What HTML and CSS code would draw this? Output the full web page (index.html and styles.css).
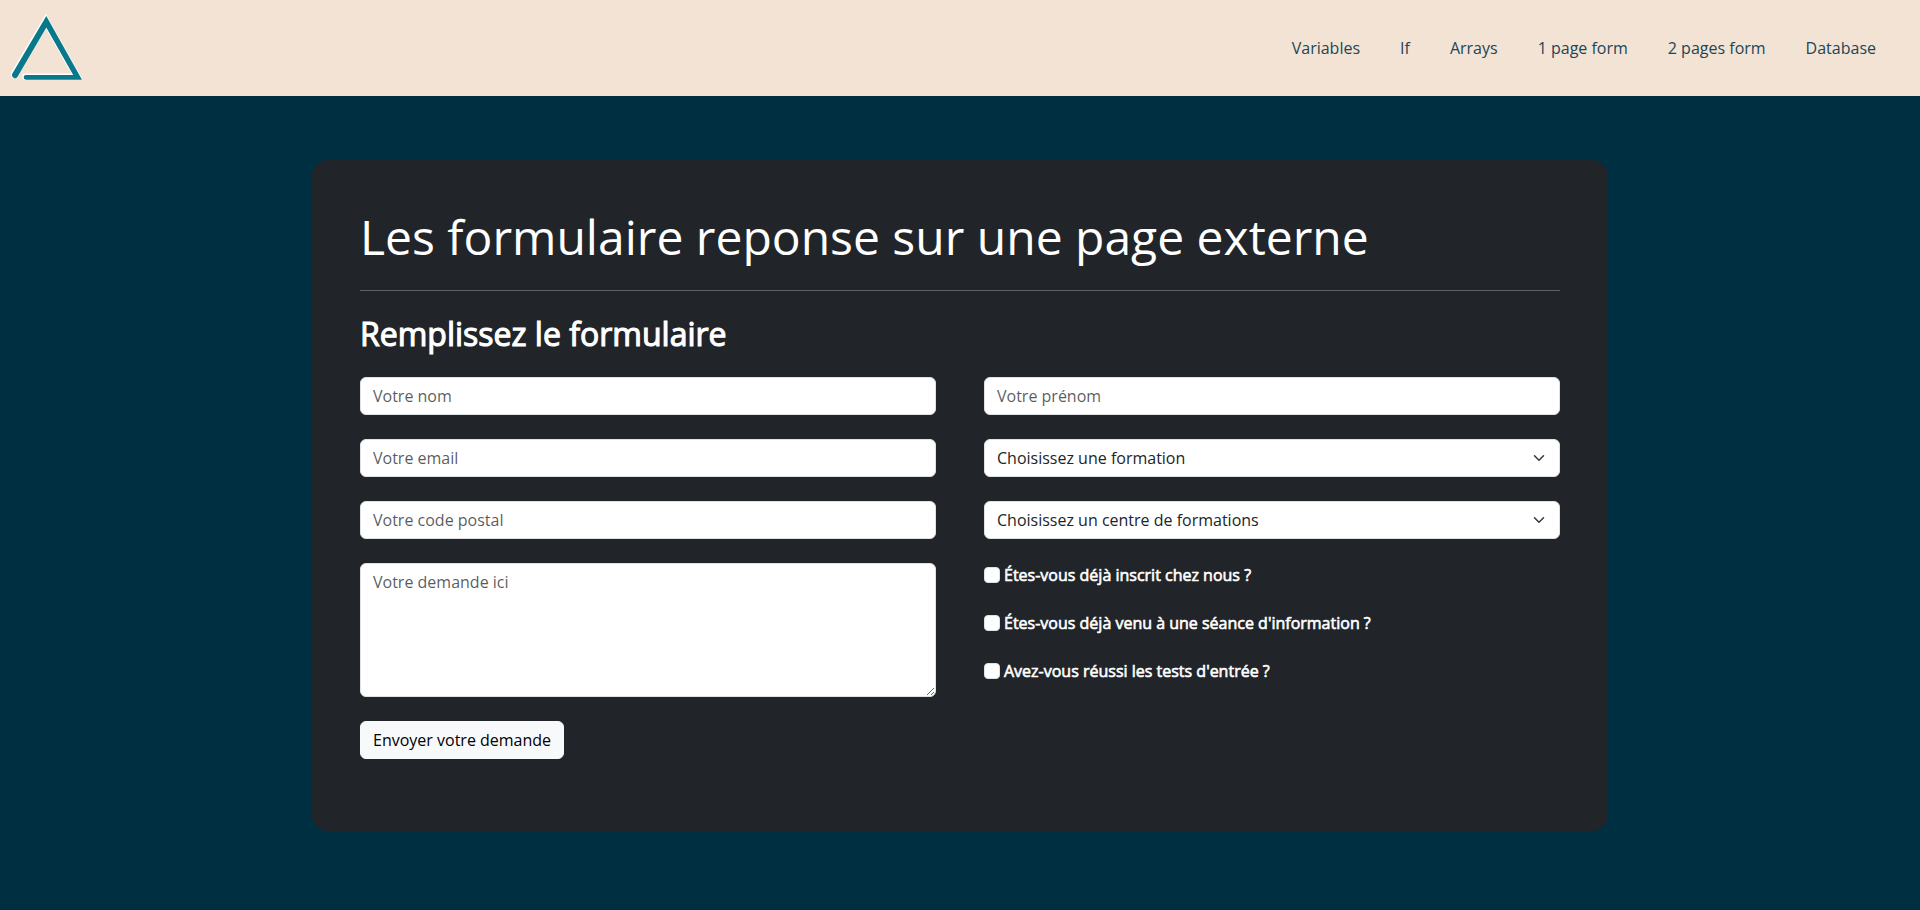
FILE: index.html
```html
<!DOCTYPE html>
<html lang="fr">
<head>
<meta charset="utf-8">
<title>Formulaire</title>
<link rel="stylesheet" href="styles.css">
</head>
<body>
<header class="site-header">
  <a class="logo" href="#" aria-label="Accueil">
    <svg width="96" height="96" viewBox="0 0 96 96">
      <path transform="translate(-.5 -.6)" d="M46.3 16L82 79.7H26a2.35 2.35 0 0 1 0-4.7H73.2L46.3 27.5L17.7 76.5A3 3 0 0 1 12.4 73.6Z" fill="#fff" stroke="#fff" stroke-width="1.6"/>
      <path d="M46.3 16L82 79.7H26a2.35 2.35 0 0 1 0-4.7H73.2L46.3 27.5L17.7 76.5A3 3 0 0 1 12.4 73.6Z" fill="#08788a"/>
    </svg>
  </a>
  <nav class="nav">
    <a href="#">Variables</a>
    <a href="#">If</a>
    <a href="#">Arrays</a>
    <a href="#">1 page form</a>
    <a href="#">2 pages form</a>
    <a href="#">Database</a>
  </nav>
</header>
<main class="card">
  <h1 class="title">Les formulaire reponse sur une page externe</h1>
  <hr class="rule">
  <h2 class="subtitle">Remplissez le formulaire</h2>
  <form class="form">
    <input class="field" type="text" placeholder="Votre nom">
    <input class="field" type="text" placeholder="Votre prénom">
    <input class="field" type="email" placeholder="Votre email">
    <div class="select-wrap">
      <select class="field select"><option>Choisissez une formation</option></select>
      <svg class="chevron" viewBox="0 0 16 16" width="16" height="12"><path d="m2 5 6 6 6-6"/></svg>
    </div>
    <input class="field" type="text" placeholder="Votre code postal">
    <div class="select-wrap">
      <select class="field select"><option>Choisissez un centre de formations</option></select>
      <svg class="chevron" viewBox="0 0 16 16" width="16" height="12"><path d="m2 5 6 6 6-6"/></svg>
    </div>
    <textarea class="field area" rows="5" placeholder="Votre demande ici"></textarea>
    <div class="checks">
      <label class="check"><input type="checkbox"><span>Étes-vous déjà inscrit chez nous ?</span></label>
      <label class="check"><input type="checkbox"><span>Étes-vous déjà venu à une séance d'information ?</span></label>
      <label class="check"><input type="checkbox"><span>Avez-vous réussi les tests d'entrée ?</span></label>
    </div>
    <button class="submit" type="button">Envoyer votre demande</button>
  </form>
</main>
</body>
</html>
```
FILE: styles.css
```css
* {
  box-sizing: border-box;
}

body {
  margin: 0;
  background: #002f41;
  color: #fff;
  font: 400 16px/24px "Open Sans", sans-serif;
}

.site-header {
  display: flex;
  align-items: center;
  justify-content: space-between;
  height: 96px;
  padding-right: 44px;
  background: #f3e3d4;
}

.logo,
.logo svg {
  display: block;
}

.nav {
  display: flex;
  gap: 40px;
}

.nav a {
  color: #1b4656;
  text-decoration: none;
}

.card {
  width: 1296px;
  margin: 64px auto 0;
  padding: 48px 48px 72px;
  border-radius: 16px;
  background: #212529;
}

.title {
  margin: 0;
  font-size: 48px;
  font-weight: 400;
  line-height: 1.2;
}

.rule {
  margin: 24px 0;
  border: 0;
  border-top: 1px solid #fff;
  opacity: 0.28;
}

.subtitle {
  margin: 0;
  font-size: 32px;
  font-weight: 400;
  line-height: 1.2;
  -webkit-text-stroke: 1.1px #fff;
}

.form {
  display: grid;
  grid-template-columns: 1fr 1fr;
  gap: 24px 48px;
  padding-top: 24px;
}

.field {
  display: block;
  width: 100%;
  height: 38px;
  margin: 0;
  padding: 6px 12px;
  border: 1px solid #dee2e6;
  border-radius: 6px;
  background: #fff;
  color: #212529;
  font: inherit;
  appearance: none;
}

.field::placeholder {
  color: rgba(33, 37, 41, 0.75);
}

.area {
  height: 134px;
  resize: vertical;
}

.select-wrap {
  position: relative;
}

.chevron {
  position: absolute;
  top: 13px;
  right: 13px;
  fill: none;
  stroke: #343a40;
  stroke-width: 2;
  stroke-linecap: round;
  stroke-linejoin: round;
}

.checks {
  display: flex;
  flex-direction: column;
  gap: 24px;
}

.check {
  display: flex;
  gap: 4px;
  height: 24px;
  -webkit-text-stroke: 0.6px #fff;
}

.check input {
  width: 16px;
  height: 16px;
  margin: 4px 0 0;
  border: 1px solid #dee2e6;
  border-radius: 4px;
  background: #fff;
  appearance: none;
}

.submit {
  justify-self: start;
  height: 38px;
  padding: 6px 12px;
  border: 1px solid #f8f9fa;
  border-radius: 6px;
  background: #f8f9fa;
  color: #000;
  font: inherit;
}
```
